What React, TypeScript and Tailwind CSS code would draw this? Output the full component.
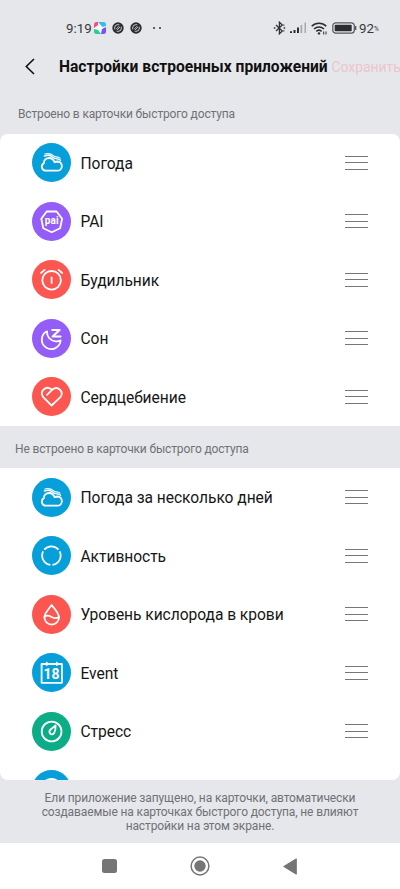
import type { ReactNode } from 'react';

type Item = {
  id: string;
  label: string;
  color: string;
  icon: ReactNode;
};

const cloudIcon = (
  <>
    <path d="M13.900 27.700h11.300c6 0 6.300-9 .3-9.200-1.200 0-2.100.2-2.900.7-1-2.700-3-4.200-5.400-4.200-3.200 0-5.300 2.200-5.300 4.900-3.700 2.400-2.100 7.800 2 7.800z" />
    <path d="M12.300 13.100c3.400-1.400 6.200-1 8.300.9 1.100 1 1.900 1.600 3.200 1.700 1.800.1 3.300.3 4.800 1.600" strokeWidth="1.300" />
    <path d="M12.900 11c3.600-.9 6.600 0 8.400 1.600.9.800 1.700 1.100 3 1.200 1.600.1 2.700.5 3.700 1.300" strokeWidth="1.200" />
  </>
);

const paiIcon = (
  <>
    <path d="M14.700 9.500h9.900l5.500 7.300-2 9.400-8.400 4-8.400-4-2-9.400z" />
    <text x="19.800" y="22.300" textAnchor="middle" fill="#fff" stroke="none" letterSpacing=".2" className="font-[Roboto] text-[10px] font-bold">
      pai
    </text>
  </>
);

const alarmIcon = (
  <>
    <circle cx="19.600" cy="20.300" r="9.300" />
    <path d="M19.600 17.300v5.700M9 13l3.600-3.100M30.200 13l-3.600-3.100" />
  </>
);

const sleepIcon = (
  <>
    <path d="M15 12.300a9.400 9.400 0 1 0 13.600 9c-1.600 1-3.300 1.200-5 1-5.500-.6-9-4.800-8.600-10z" />
    <path d="M20.200 10.900h7.400l-7 6.600h8" strokeWidth="2" />
  </>
);

const heartIcon = (
  <path d="M15 17.800l5.300-5.100c5.300-4.500 12.200 2.100 8.100 7.400l-8.800 8.400-8.200-8.200c-4.600-5.500 2.300-12 7.600-8.200" />
);

const activityIcon = (
  <circle cx="19.400" cy="19.700" r="9.300" pathLength="360" strokeDasharray="111 13 99 13 111 13" strokeDashoffset="-96.500" strokeLinecap="butt" />
);

const oxygenIcon = (
  <>
    <path d="M19.700 9.900c2 3.200 7.300 8.200 7.300 12.400a7.300 7.300 0 0 1-14.600 0c0-4.200 5.300-9.200 7.300-12.400z" />
    <path d="M12.600 21.400c2.500-1.600 4.500-.8 7 .6s4.600 1.600 7.300 0" />
  </>
);

const eventIcon = (
  <>
    <path d="M9.600 11h20.300v18.800H9.600zM14.700 9.600V12M24.800 9.600V12" />
    <text x="19.600" y="25.600" textAnchor="middle" fill="#fff" stroke="none" className="font-[Roboto] text-[14px] font-bold">
      18
    </text>
  </>
);

const stressIcon = (
  <>
    <circle cx="19.600" cy="19.500" r="9.900" />
    <path d="M23.600 13.500c.1 3-.5 5.900-1.500 7.500-1 1.500-2.900 1.700-3.900.7-1.100-1.200-.8-3 .4-4.200 1.400-1.400 3.400-2.500 5-4z" />
  </>
);

const builtIn: Item[] = [
  { id: 'weather', label: 'Погода', color: 'bg-[#079fda]', icon: cloudIcon },
  { id: 'pai', label: 'PAI', color: 'bg-[#955df8]', icon: paiIcon },
  { id: 'alarm', label: 'Будильник', color: 'bg-[#fb5750]', icon: alarmIcon },
  { id: 'sleep', label: 'Сон', color: 'bg-[#955df8]', icon: sleepIcon },
  { id: 'heart', label: 'Сердцебиение', color: 'bg-[#fb5750]', icon: heartIcon },
];

const notBuiltIn: Item[] = [
  { id: 'forecast', label: 'Погода за несколько дней', color: 'bg-[#079fda]', icon: cloudIcon },
  { id: 'activity', label: 'Активность', color: 'bg-[#079fda]', icon: activityIcon },
  { id: 'oxygen', label: 'Уровень кислорода в крови', color: 'bg-[#fb5750]', icon: oxygenIcon },
  { id: 'event', label: 'Event', color: 'bg-[#079fda]', icon: eventIcon },
  { id: 'stress', label: 'Стресс', color: 'bg-[#0aad86]', icon: stressIcon },
];

const IconCircle = ({ color, children }: { color: string; children: ReactNode }) => (
  <div className={`h-[39px] w-[39px] shrink-0 rounded-full ${color}`}>
    <svg viewBox="0 0 39 39" className="h-full w-full" fill="none" stroke="#fff" strokeWidth="1.800" strokeLinecap="round" strokeLinejoin="round">
      {children}
    </svg>
  </div>
);

const Row = ({ item }: { item: Item }) => (
  <div className="flex h-[58.500px] items-center pr-8 pl-8">
    <IconCircle color={item.color}>{item.icon}</IconCircle>
    <span className="ml-[9.500px] flex-1 pt-[3px] text-[15.600px] tracking-[-0.05px] whitespace-nowrap text-[#161616]">{item.label}</span>
    <div className="flex w-[23px] flex-col gap-[5.500px]">
      <div className="h-px bg-[#777]" />
      <div className="h-px bg-[#777]" />
      <div className="h-px bg-[#777]" />
    </div>
  </div>
);

const DoNotDisturb = () => (
  <svg viewBox="0 0 12 12" className="h-3 w-3" fill="none">
    <circle cx="6" cy="6" r="5.700" fill="#2c2d30" />
    <circle cx="6" cy="6" r="3.400" stroke="#d8d9dd" strokeWidth=".9" />
    <path d="M3 9l6-6" stroke="#2c2d30" strokeWidth="2.600" />
    <path d="M4 7.300L7.300 4M4.900 8.200L8.200 4.900" stroke="#d8d9dd" strokeWidth=".8" />
  </svg>
);

const StatusBar = () => (
  <div className="flex h-[47px] items-center pt-[9px] pl-[66px] text-[#37383b]">
    <span className="w-[28px] pt-px text-[13.300px]">9:19</span>
    <svg viewBox="0 0 12 12" className="h-3 w-3">
      <rect width="12" height="12" rx="2.500" fill="#f4f5fb" />
      <path d="M0 6V2.500A2.500 2.500 0 0 1 2.500 0H4v3z" fill="#f8506d" />
      <path d="M4 0h5.500A2.500 2.500 0 0 1 12 2.500V4L8.500 5z" fill="#35bdf0" />
      <path d="M12 5v4.500A2.500 2.500 0 0 1 9.500 12H7l1-5z" fill="#7853ee" />
      <path d="M0 7l4 1 3 4H2.500A2.500 2.500 0 0 1 0 9.500z" fill="#27ce8d" />
      <path d="M6 2.800l1 2.200 2.200 1L7 7 6 9.200 5 7 2.800 6 5 5z" fill="#fff" />
    </svg>
    <div className="ml-[6px] flex gap-[6px]">
      <DoNotDisturb />
      <DoNotDisturb />
    </div>
    <div className="ml-[10.500px] flex gap-[4px]">
      <div className="h-[2px] w-[2px] rounded-full bg-[#333]" />
      <div className="h-[2px] w-[2px] rounded-full bg-[#333]" />
    </div>

    <svg viewBox="0 0 13 14" className="ml-[112.500px] h-[14px] w-[13px]" fill="none" stroke="#323336" strokeWidth="1.300">
      <path d="M3 4l6.300 6L6.400 12.800V1.200L9.300 4 3 10" />
      <path d="M.8 7h1.600M10.600 7h1.600M10.400 4.400l.9-.7M10.400 9.600l.9.700" />
    </svg>
    <svg viewBox="0 0 17 12" className="ml-[4px] h-3 w-[17px]">
      <path d="M0 9.200h2V11H0zM3.500 8h2v3h-2zM7 5.500h2V11H7z" fill="#2c2d30" />
      <path d="M10.500 3h1.700v8h-1.700zM14.500.5h1.500V11h-1.500z" fill="#a7a8ac" />
    </svg>
    <svg viewBox="0 0 17 13" className="ml-[4px] h-[13px] w-[17px]" fill="none" stroke="#2c2d30" strokeWidth="1.500">
      <path d="M.7 4.300c4-4 10.600-4 14.600 0M3 7c2.800-2.700 7.200-2.700 10 0M5.300 9.400c1.500-1.400 3.900-1.400 5.400 0" />
      <circle cx="8" cy="11.400" r="1.200" fill="#2c2d30" stroke="none" />
      <path d="M12.700 12.500V9.500M15 9.500v3" strokeWidth="1" />
    </svg>
    <svg viewBox="0 0 25 12" className="ml-[4px] h-3 w-[25px]">
      <rect x=".8" y=".8" width="21.500" height="10.400" rx="3" fill="none" stroke="#555659" strokeWidth="1.200" />
      <rect x="2.700" y="2.700" width="17" height="6.600" rx=".8" fill="#2c2d30" />
      <path d="M23.700 4v4" stroke="#444" strokeWidth="1.200" />
    </svg>
    <span className="ml-[2px] pt-px text-[13.300px]">92</span>
    <span className="pt-1 text-[6.500px]">%</span>
  </div>
);

const App = () => {
  return (
    <div className="flex h-[889px] w-[400px] flex-col overflow-hidden bg-[#e6e7eb] font-[Roboto,sans-serif]">
      <StatusBar />

      {/* Title bar */}
      <header className="flex h-[39px] shrink-0 items-center whitespace-nowrap">
        <svg viewBox="0 0 10 17" className="ml-[25px] h-[17px] w-[10px] shrink-0" fill="none" stroke="#111" strokeWidth="1.600">
          <path d="M9 1L1.300 8.500 9 16" />
        </svg>
        <h1 className="ml-[24px] w-[272.500px] shrink-0 pt-0.5 text-[15.600px] font-bold text-[#111]">Настройки встроенных приложений</h1>
        <button className="shrink-0 pt-px text-[13.900px] text-[#edc5cc]">Сохранить</button>
      </header>

      <h2 className="flex h-[47.500px] shrink-0 items-center pt-[8px] pl-[18px] text-[12px] tracking-[-0.15px] text-[#707175]">
        Встроено в карточки быстрого доступа
      </h2>

      {/* Card list, cut off at the bottom by the hint */}
      <main className="h-[646px] shrink-0 overflow-hidden rounded-lg bg-white">
        {builtIn.map((item) => (
          <Row key={item.id} item={item} />
        ))}
        <h2 className="flex h-[42px] items-center bg-[#e6e7eb] pl-[15px] text-[12px] tracking-[-0.15px] text-[#707175]">
          <span className="pt-1">Не встроено в карточки быстрого доступа</span>
        </h2>
        {notBuiltIn.map((item) => (
          <Row key={item.id} item={item} />
        ))}
        <div className="pt-[9.500px] pl-8">
          <IconCircle color="bg-[#079fda]">
            <circle cx="19.500" cy="19.500" r="10.500" />
          </IconCircle>
        </div>
      </main>

      <p className="h-[63.500px] shrink-0 pt-[11px] text-center text-[12px] leading-[14px] tracking-[-0.12px] text-[#707175]">
        Ели приложение запущено, на карточки, автоматически
        <br />
        создаваемые на карточках быстрого доступа, не влияют
        <br />
        настройки на этом экране.
      </p>

      {/* System navigation */}
      <nav className="flex flex-1 items-center bg-white pl-[102px]">
        <div className="h-[14.500px] w-[14.500px] rounded-[2.500px] bg-[#757575]" />
        <svg viewBox="0 0 20 20" className="ml-[73.500px] h-5 w-5">
          <circle cx="10" cy="10" r="8.900" fill="none" stroke="#757575" strokeWidth="1.500" />
          <circle cx="10" cy="10" r="5.700" fill="#757575" />
        </svg>
        <svg viewBox="0 0 14 17" className="ml-[72.500px] h-[17px] w-[14px]">
          <path d="M13.300.8v15.400L.7 8.500z" fill="#757575" stroke="#757575" strokeLinejoin="round" />
        </svg>
      </nav>
    </div>
  );
};

export default App;
